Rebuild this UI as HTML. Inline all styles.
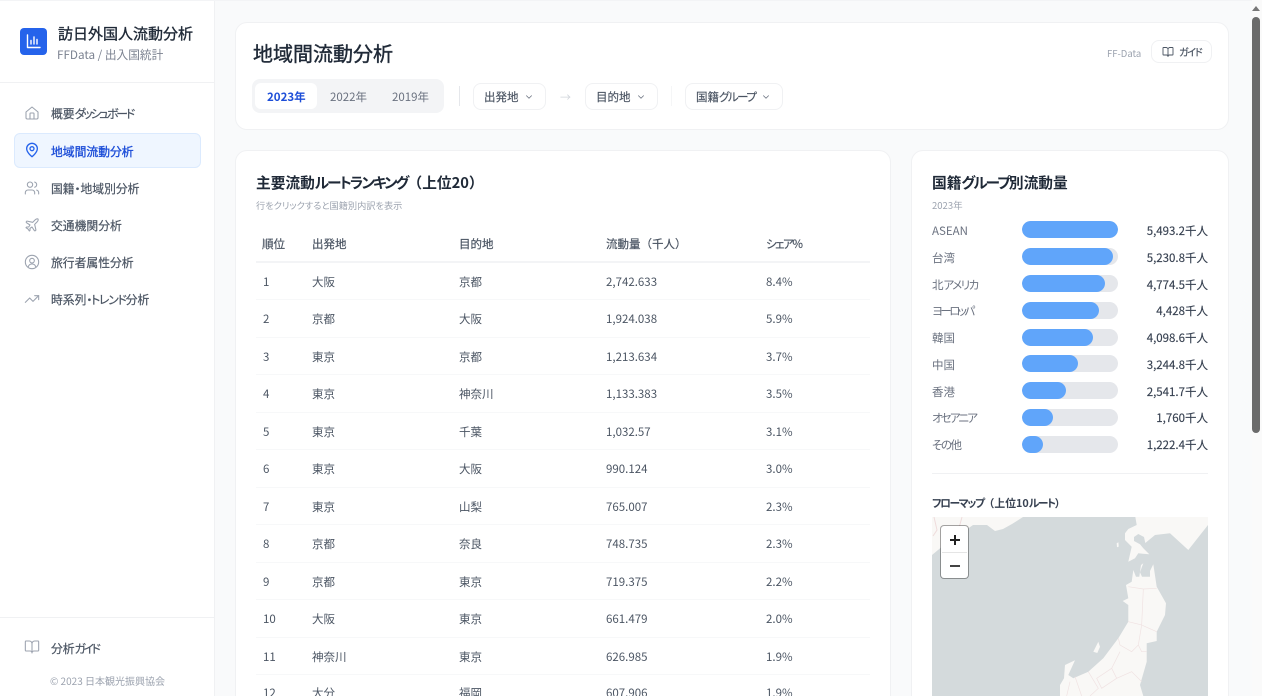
<!DOCTYPE html>
<html lang="ja"><head><meta charset="utf-8"><title>地域間流動分析</title>
<style>
*{box-sizing:border-box;margin:0;padding:0}
html,body{width:1262px;height:696px;overflow:hidden;background:#f9fafb}
body{position:relative;font-family:"Noto Sans CJK JP","Liberation Sans",sans-serif;font-feature-settings:"palt";color:#374151}
.a{position:absolute;white-space:nowrap;line-height:1}
.k{letter-spacing:-.13em}
.n{font-feature-settings:normal}
.side{position:absolute;left:0;top:1px;width:215px;height:695px;background:#fff;border-right:1px solid #f0f1f3}
.hr{position:absolute;height:1px;background:#f0f1f3}
.card{position:absolute;background:#fff;border:1px solid #f0f1f3;border-radius:12px}
.nav{position:absolute;left:51px;font-size:11.8px;-webkit-text-stroke:.2px;color:#4b5563;line-height:1;white-space:nowrap}
.h{font-size:14.7px;font-weight:700;color:#1f2937}
svg.i{position:absolute;fill:none;stroke:#9ca3af;stroke-width:2;stroke-linecap:round;stroke-linejoin:round}
.dd{position:absolute;top:83px;height:27px;background:#fff;border:1px solid #f0f1f3;border-radius:8px;font-size:11.5px;-webkit-text-stroke:.15px;color:#4b5563;line-height:26px;padding-left:10px;white-space:nowrap}
.dd svg{position:absolute;top:8px;width:10px;height:10px;fill:none;stroke:#6b7280;stroke-width:2;stroke-linecap:round;stroke-linejoin:round}
.tc{position:absolute;font-size:11.5px;line-height:1;color:#4b5563;white-space:nowrap;margin-top:1px}
.th{position:absolute;font-size:11.5px;line-height:1;-webkit-text-stroke:.2px;color:#4b5563;white-space:nowrap;margin-top:1px}
.rl{position:absolute;left:256px;width:614px;height:1px;background:#f7f8f9}
.lab{position:absolute;left:932px;font-size:11.5px;color:#6b7280;line-height:1;white-space:nowrap;margin-top:1px}
.track{position:absolute;left:1022px;width:96px;height:17px;border-radius:9px;background:#e5e7eb;overflow:hidden}
.track i{display:block;height:17px;border-radius:9px;background:#60a5fa}
.val{position:absolute;right:54px;font-size:11.5px;-webkit-text-stroke:.15px;color:#374151;line-height:1;white-space:nowrap;margin-top:1px}
</style></head><body>
<div class="a" style="left:0;top:0;width:1262px;height:1px;background:#f3f4f6"></div>

<div class="side"></div>
<div class="a" style="left:20px;top:28px;width:27px;height:27px;background:#2563eb;border-radius:4px"></div>
<svg class="i" style="left:26px;top:34px;stroke:#fff;stroke-width:1.4" width="15" height="15" viewBox="0 0 15 15"><path d="M1.500 1v12.500H14M5 10V6.500M8 10V3M11 10V5.500"/></svg>
<div class="a" style="left:58px;top:26px;font-size:15px;-webkit-text-stroke:.35px;color:#1f2937">訪日外国人流動分析</div>
<div class="a" style="left:57px;top:49px;font-size:11.700px;color:#7b8290">FFData / 出入国統計</div>
<div class="hr" style="left:0;top:82px;width:214px"></div>

<svg class="i" style="left:24px;top:105px;stroke-width:1.6" width="16" height="16" viewBox="0 0 24 24"><path d="M3 10.500 12 3l9 7.500V19a2 2 0 0 1-2 2H5a2 2 0 0 1-2-2z"/><path d="M9 21v-8a1 1 0 0 1 1-1h4a1 1 0 0 1 1 1v8"/></svg>
<div class="nav" style="top:108px">概要<span class="k" style="letter-spacing:-.18em">ダッシュボード</span></div>

<div class="a" style="left:14px;top:133px;width:187px;height:35px;background:#eff6ff;border:1px solid #dbeafe;border-radius:6px"></div>
<svg class="i" style="left:24px;top:142px;stroke:#2563eb" width="16" height="16" viewBox="0 0 24 24"><path d="M20 10c0 6-8 12-8 12s-8-6-8-12a8 8 0 0 1 16 0z"/><circle cx="12" cy="10" r="3"/></svg>
<div class="nav" style="top:146px;color:#1d4ed8;-webkit-text-stroke:.35px">地域間流動分析</div>

<svg class="i" style="left:24px;top:180px;stroke-width:1.6" width="16" height="16" viewBox="0 0 24 24"><path d="M16 21v-2a4 4 0 0 0-4-4H6a4 4 0 0 0-4 4v2"/><circle cx="9" cy="7" r="4"/><path d="M22 21v-2a4 4 0 0 0-3-3.870M16 3.130a4 4 0 0 1 0 7.750"/></svg>
<div class="nav" style="top:183px">国籍・地域別分析</div>

<svg class="i" style="left:24px;top:217px;stroke-width:1.6" width="16" height="16" viewBox="0 0 24 24"><path d="M17.800 19.200 16 11l3.500-3.500C21 6 21.500 4 21 3c-1-.5-3 0-4.500 1.500L13 8 4.800 6.200c-.5-.1-.9.1-1.100.5l-.3.5c-.2.500-.1 1 .3 1.300L9 12l-2 3H4l-1 1 3 2 2 3 1-1v-3l3-2 3.500 5.300c.3.400.8.500 1.300.3l.5-.2c.4-.3.600-.7.500-1.200z"/></svg>
<div class="nav" style="top:220px">交通機関分析</div>

<svg class="i" style="left:24px;top:254px;stroke-width:1.6" width="16" height="16" viewBox="0 0 24 24"><circle cx="12" cy="12" r="10"/><circle cx="12" cy="10" r="3.500"/><path d="M6.500 19c.7-2.500 3-4 5.500-4s4.800 1.500 5.500 4"/></svg>
<div class="nav" style="top:257px">旅行者属性分析</div>

<svg class="i" style="left:24px;top:291px;stroke-width:1.6" width="16" height="16" viewBox="0 0 24 24"><path d="M22 7 13.500 15.500l-5-5L2 17"/><path d="M16 7h6v6"/></svg>
<div class="nav" style="top:294px">時系列<span class="k" style="letter-spacing:-.1em">・トレンド</span>分析</div>

<div class="hr" style="left:0;top:617px;width:214px"></div>
<svg class="i" style="left:24px;top:639px;stroke-width:1.6" width="16" height="16" viewBox="0 0 24 24"><path d="M12 7v14M3 18a1 1 0 0 1-1-1V4a1 1 0 0 1 1-1h5a4 4 0 0 1 4 4 4 4 0 0 1 4-4h5a1 1 0 0 1 1 1v13a1 1 0 0 1-1 1h-6a3 3 0 0 0-3 3 3 3 0 0 0-3-3z"/></svg>
<div class="nav" style="top:643px">分析<span class="k" style="letter-spacing:-.2em">ガイド</span></div>
<div class="a" style="left:50px;top:676px;font-size:10px;color:#9ca3af">© 2023 日本観光振興協会</div>

<div class="card" style="left:235px;top:22px;width:994px;height:108px"></div>
<div class="a" style="left:253px;top:43px;font-size:20px;-webkit-text-stroke:.4px;color:#1f2937">地域間流動分析</div>
<div class="a" style="left:252px;top:79px;width:192px;height:34px;background:#f3f4f6;border-radius:8px"></div>
<div class="a" style="left:255px;top:83px;width:62px;height:26px;background:#fff;border-radius:6px"></div>
<div class="a" style="left:267px;top:92px;font-size:11.500px;font-weight:700;color:#1d4ed8">2023年</div>
<div class="a" style="left:330px;top:92px;font-size:11.500px;color:#6b7280">2022年</div>
<div class="a" style="left:392px;top:92px;font-size:11.500px;color:#6b7280">2019年</div>
<div class="a" style="left:459px;top:86px;width:1px;height:20px;background:#e5e7eb"></div>
<div class="dd" style="left:473px;width:73px">出発地<svg style="left:50px" viewBox="0 0 24 24"><path d="m6 9 6 6 6-6"/></svg></div>
<div class="a" style="left:560px;top:92px;font-size:11px;color:#d1d5db">→</div>
<div class="dd" style="left:585px;width:73px">目的地<svg style="left:50px" viewBox="0 0 24 24"><path d="m6 9 6 6 6-6"/></svg></div>
<div class="a" style="left:671px;top:86px;width:1px;height:20px;background:#f5f6f7"></div>
<div class="dd" style="left:685px;width:98px">国籍<span class="k">グループ</span><svg style="left:75px" viewBox="0 0 24 24"><path d="m6 9 6 6 6-6"/></svg></div>
<div class="a" style="left:1107px;top:49px;font-size:9.500px;color:#9ca3af">FF-Data</div>
<div class="a" style="left:1151px;top:40px;width:61px;height:23px;border:1px solid #f0f1f3;border-radius:8px"></div>
<svg class="i" style="left:1162px;top:46px;stroke:#4b5563;stroke-width:1.800" width="12" height="12" viewBox="0 0 24 24"><path d="M12 7v14M3 18a1 1 0 0 1-1-1V4a1 1 0 0 1 1-1h5a4 4 0 0 1 4 4 4 4 0 0 1 4-4h5a1 1 0 0 1 1 1v13a1 1 0 0 1-1 1h-6a3 3 0 0 0-3 3 3 3 0 0 0-3-3z"/></svg>
<div class="a k" style="left:1179px;top:47px;font-size:10px;-webkit-text-stroke:.2px;color:#4b5563">ガイド</div>

<div class="card" style="left:235px;top:150px;width:656px;height:560px"></div>
<div class="a h" style="left:256px;top:176px">主要流動<span class="k">ルートランキング</span><span class="n">（</span>上位20<span class="n">）</span></div>
<div class="a" style="left:256px;top:201px;font-size:9.200px;color:#9ca3af">行をクリックすると国籍別内訳を表示</div>

<div class="th" style="left:262px;top:238px">順位</div><div class="th" style="left:312px;top:238px">出発地</div><div class="th" style="left:459px;top:238px">目的地</div><div class="th n" style="left:606px;top:238px">流動量（千人）</div><div class="th" style="left:766px;top:238px"><span class="k">シェア</span>%</div>
<div class="a" style="left:256px;top:261px;width:614px;height:2px;background:#f3f4f6"></div>

<div class="tc" style="left:263px;top:276px">1</div><div class="tc" style="left:312px;top:276px">大阪</div><div class="tc" style="left:459px;top:276px">京都</div><div class="tc" style="left:606px;top:276px">2,742.633</div><div class="tc" style="left:766px;top:276px">8.4%</div><div class="rl" style="top:299px"></div>
<div class="tc" style="left:263px;top:313px">2</div><div class="tc" style="left:312px;top:313px">京都</div><div class="tc" style="left:459px;top:313px">大阪</div><div class="tc" style="left:606px;top:313px">1,924.038</div><div class="tc" style="left:766px;top:313px">5.9%</div><div class="rl" style="top:337px"></div>
<div class="tc" style="left:263px;top:351px">3</div><div class="tc" style="left:312px;top:351px">東京</div><div class="tc" style="left:459px;top:351px">京都</div><div class="tc" style="left:606px;top:351px">1,213.634</div><div class="tc" style="left:766px;top:351px">3.7%</div><div class="rl" style="top:374px"></div>
<div class="tc" style="left:263px;top:388px">4</div><div class="tc" style="left:312px;top:388px">東京</div><div class="tc" style="left:459px;top:388px">神奈川</div><div class="tc" style="left:606px;top:388px">1,133.383</div><div class="tc" style="left:766px;top:388px">3.5%</div><div class="rl" style="top:412px"></div>
<div class="tc" style="left:263px;top:426px">5</div><div class="tc" style="left:312px;top:426px">東京</div><div class="tc" style="left:459px;top:426px">千葉</div><div class="tc" style="left:606px;top:426px">1,032.57</div><div class="tc" style="left:766px;top:426px">3.1%</div><div class="rl" style="top:449px"></div>
<div class="tc" style="left:263px;top:463px">6</div><div class="tc" style="left:312px;top:463px">東京</div><div class="tc" style="left:459px;top:463px">大阪</div><div class="tc" style="left:606px;top:463px">990.124</div><div class="tc" style="left:766px;top:463px">3.0%</div><div class="rl" style="top:487px"></div>
<div class="tc" style="left:263px;top:501px">7</div><div class="tc" style="left:312px;top:501px">東京</div><div class="tc" style="left:459px;top:501px">山梨</div><div class="tc" style="left:606px;top:501px">765.007</div><div class="tc" style="left:766px;top:501px">2.3%</div><div class="rl" style="top:524px"></div>
<div class="tc" style="left:263px;top:538px">8</div><div class="tc" style="left:312px;top:538px">京都</div><div class="tc" style="left:459px;top:538px">奈良</div><div class="tc" style="left:606px;top:538px">748.735</div><div class="tc" style="left:766px;top:538px">2.3%</div><div class="rl" style="top:562px"></div>
<div class="tc" style="left:263px;top:576px">9</div><div class="tc" style="left:312px;top:576px">京都</div><div class="tc" style="left:459px;top:576px">東京</div><div class="tc" style="left:606px;top:576px">719.375</div><div class="tc" style="left:766px;top:576px">2.2%</div><div class="rl" style="top:599px"></div>
<div class="tc" style="left:263px;top:613px">10</div><div class="tc" style="left:312px;top:613px">大阪</div><div class="tc" style="left:459px;top:613px">東京</div><div class="tc" style="left:606px;top:613px">661.479</div><div class="tc" style="left:766px;top:613px">2.0%</div><div class="rl" style="top:637px"></div>
<div class="tc" style="left:263px;top:651px">11</div><div class="tc" style="left:312px;top:651px">神奈川</div><div class="tc" style="left:459px;top:651px">東京</div><div class="tc" style="left:606px;top:651px">626.985</div><div class="tc" style="left:766px;top:651px">1.9%</div><div class="rl" style="top:674px"></div>
<div class="tc" style="left:263px;top:687px">12</div><div class="tc" style="left:312px;top:687px">大分</div><div class="tc" style="left:459px;top:687px">福岡</div><div class="tc" style="left:606px;top:687px">607.906</div><div class="tc" style="left:766px;top:687px">1.9%</div>

<div class="card" style="left:911px;top:150px;width:318px;height:560px"></div>
<div class="a h" style="left:932px;top:176px">国籍<span class="k">グループ</span>別流動量</div>
<div class="a" style="left:932px;top:201px;font-size:9.500px;color:#9ca3af">2023年</div>

<div class="lab" style="top:225px">ASEAN</div><div class="track" style="top:221px"><i style="width:96px"></i></div><div class="val" style="top:225px">5,493.2千人</div>
<div class="lab" style="top:252px">台湾</div><div class="track" style="top:248px"><i style="width:91px"></i></div><div class="val" style="top:252px">5,230.8千人</div>
<div class="lab" style="top:279px">北<span class="k">アメリカ</span></div><div class="track" style="top:275px"><i style="width:83px"></i></div><div class="val" style="top:279px">4,774.5千人</div>
<div class="lab" style="top:305px;letter-spacing:-.22em">ヨーロッパ</div><div class="track" style="top:302px"><i style="width:77px"></i></div><div class="val" style="top:305px">4,428千人</div>
<div class="lab" style="top:332px">韓国</div><div class="track" style="top:329px"><i style="width:71px"></i></div><div class="val" style="top:332px">4,098.6千人</div>
<div class="lab" style="top:359px">中国</div><div class="track" style="top:355px"><i style="width:56px"></i></div><div class="val" style="top:359px">3,244.8千人</div>
<div class="lab" style="top:386px">香港</div><div class="track" style="top:382px"><i style="width:44px"></i></div><div class="val" style="top:386px">2,541.7千人</div>
<div class="lab" style="top:412px;letter-spacing:-.16em">オセアニア</div><div class="track" style="top:409px"><i style="width:31px"></i></div><div class="val" style="top:412px">1,760千人</div>
<div class="lab" style="top:439px"><span class="k">その</span>他</div><div class="track" style="top:436px"><i style="width:21px"></i></div><div class="val" style="top:439px">1,222.4千人</div>

<div class="hr" style="left:932px;top:473px;width:276px"></div>
<div class="a" style="left:932px;top:498px;font-size:10.800px;font-weight:700;color:#374151"><span class="k">フローマップ</span><span class="n">（</span>上位10<span class="k">ルート</span><span class="n">）</span></div>

<svg style="position:absolute;left:932px;top:517px" width="276" height="179" viewBox="932 517 276 179">
<rect x="932" y="517" width="276" height="179" fill="#d4dadc"/>
<g fill="#f9f8f6">
<path d="M932 517H1023L1012 524 1003 529 995 531 987 525 973 525 963 532 950 540 932 555z"/>
<path d="M1135 515 1136.700 525 1128.300 529 1125 533.300 1125 540 1131.700 546.700 1128.300 561.700 1135 558.300 1138.300 553.300 1149.300 554.300 1143.300 548.300 1140 544.300 1134 541 1134 537 1138.300 534 1144 537 1145.300 543 1155 535 1170 533.300 1188.300 550 1208 525V515z"/>
<path d="M1133.300 570 1131.700 581.700 1126 585 1128.300 598.300 1122.700 601 1128.300 605 1128.300 621.700 1118.300 638.300 1103.300 658.300 1088.300 671.700 1073.300 678.300 1068.300 675 1075 660.300 1065 665 1064 678.300 1060 685V696H1143.300L1140 685 1146.700 661.700 1146.700 643.300 1156.700 641 1156.700 631.700 1165 615 1166 603.300 1156.700 586.700 1153.300 564.300 1150 571 1150 576.700 1142 576.700 1140 572.300 1143.300 563.300 1141 565 1139.300 576.700 1136 576.700z"/>
<path d="M1098.300 641.700 1093.300 651.700 1097.300 653 1100 646.700z"/>
<path d="M1116.700 543.300l1.700-1 .3 4.300-1.700.7z"/>
</g>
<g transform="translate(1060 515) scale(.33333)" fill="none" stroke="#f0e2e2" stroke-width="2">
<path d="M205 215 250 222 290 220M250 222 245 330 205 320M245 330 290 350M245 330 235 390 215 410 180 390 175 370M235 390 245 410 260 410M180 410 155 460 170 490 215 470 245 500M155 460 110 490 125 520 170 490M85 470 115 520 90 543M45 485 65 543M30 500 20 543"/>
</g>
<g fill="none" stroke="#efdcdc" stroke-width="1"><path d="M934 517 937 530 933 536M962 517 959 528"/></g>
</svg>

<div class="a" style="left:941px;top:526px;width:27px;height:52px;background:#fff;border-radius:3px;box-shadow:0 0 0 1px rgba(0,0,0,.35)"></div>
<div class="a" style="left:942px;top:552px;width:25px;height:1px;background:#e5e5e5"></div>
<div class="a" style="left:950px;top:539px;width:10px;height:2px;background:#222"></div>
<div class="a" style="left:954px;top:535px;width:2px;height:10px;background:#222"></div>
<div class="a" style="left:950px;top:565px;width:10px;height:2px;background:#444"></div>

<div class="a" style="left:1252px;top:0;width:10px;height:696px;background:#fafafa"></div>
<svg style="position:absolute;left:1252px;top:4px" width="8" height="8" viewBox="0 0 8 8"><path d="M0 7 4 2 8 7z" fill="#777"/></svg>
<div class="a" style="left:1252px;top:17px;width:8px;height:416px;background:#6b6b6b;border-radius:4px"></div>
</body></html>
